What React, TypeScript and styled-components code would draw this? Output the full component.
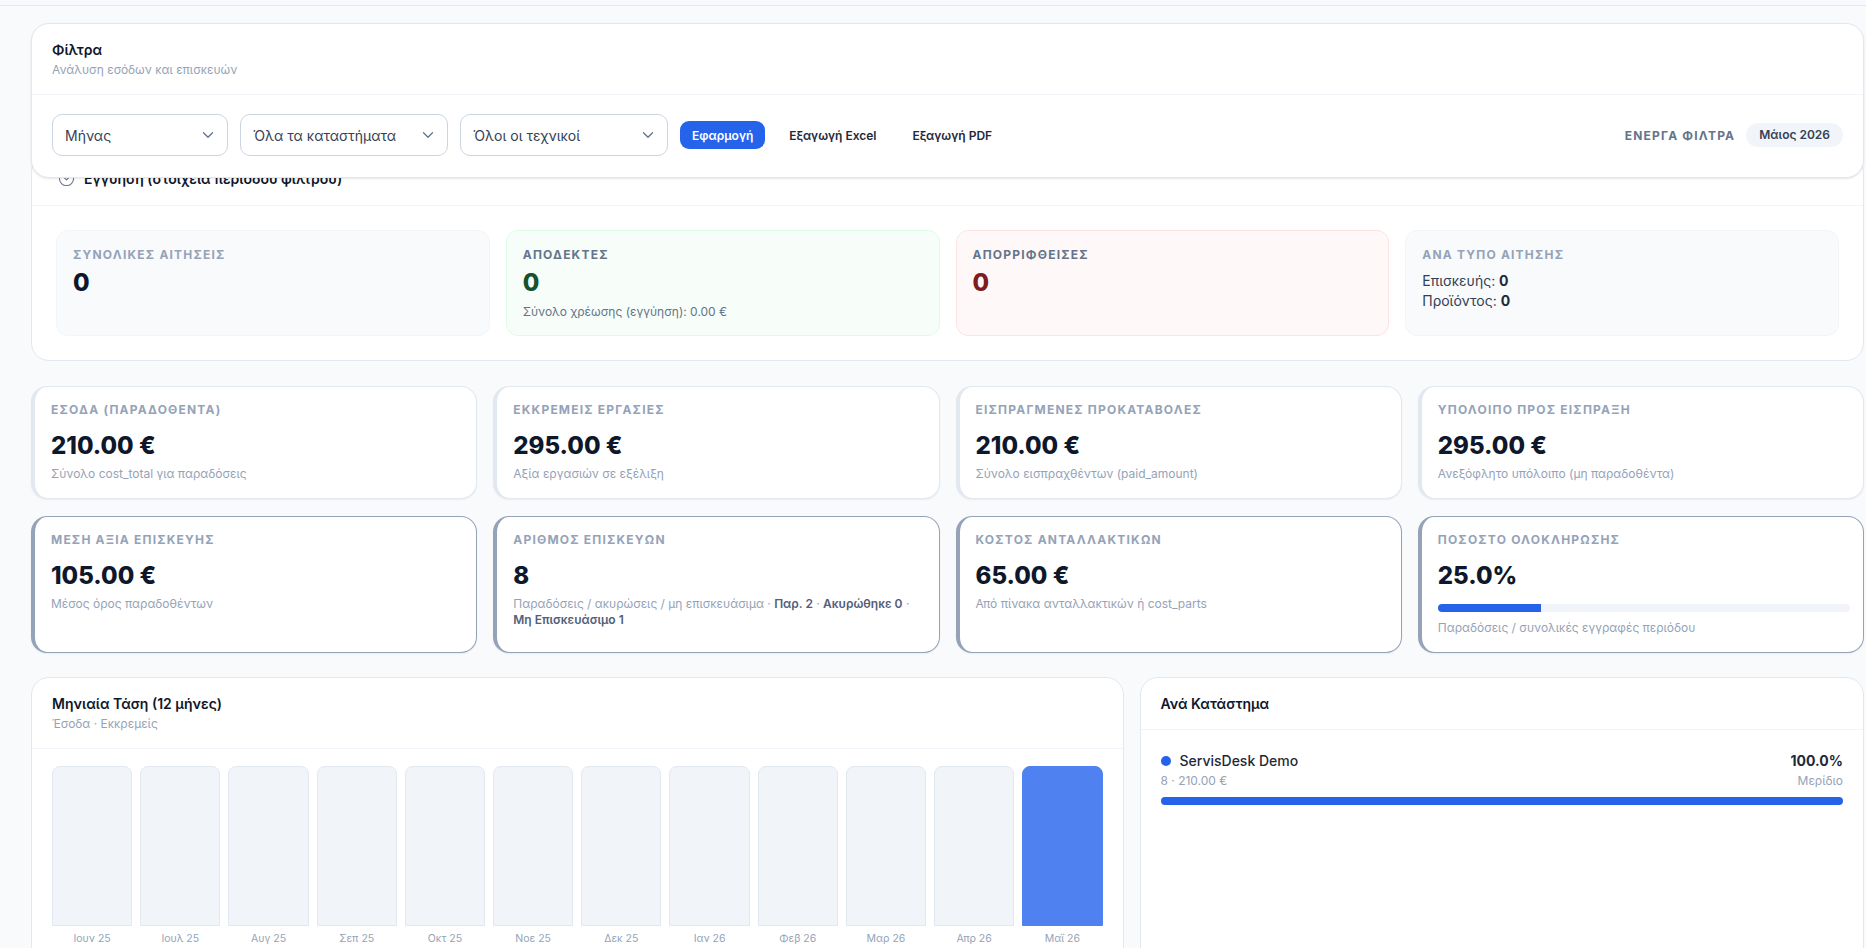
import { ChevronDown, CircleChevronDown } from "lucide-react";
import styled, { createGlobalStyle } from "styled-components";

const months = [
  "Ιουν 25",
  "Ιουλ 25",
  "Αυγ 25",
  "Σεπ 25",
  "Οκτ 25",
  "Νοε 25",
  "Δεκ 25",
  "Ιαν 26",
  "Φεβ 26",
  "Μαρ 26",
  "Απρ 26",
  "Μαϊ 26",
];

const App = () => {
  return (
    <>
      <GlobalStyle />
      <Page>
        <TopEdge />
        <Main>
          <FilterCard>
            <PanelHead>
              <PanelTitle>Φίλτρα</PanelTitle>
              <PanelSub>Ανάλυση εσόδων και επισκευών</PanelSub>
            </PanelHead>
            <FilterRow>
              <SelectBox $width={176}>
                Μήνας
                <ChevronDown size={18} strokeWidth={1.7} />
              </SelectBox>
              <SelectBox $width={208}>
                Όλα τα καταστήματα
                <ChevronDown size={18} strokeWidth={1.7} />
              </SelectBox>
              <SelectBox $width={208}>
                Όλοι οι τεχνικοί
                <ChevronDown size={18} strokeWidth={1.7} />
              </SelectBox>
              <PrimaryButton>Εφαρμογή</PrimaryButton>
              <GhostButton>Εξαγωγή Excel</GhostButton>
              <GhostButton>Εξαγωγή PDF</GhostButton>
              <ActiveFilters>
                <ActiveLabel>ΕΝΕΡΓΑ ΦΙΛΤΡΑ</ActiveLabel>
                <Chip>Μάιος 2026</Chip>
              </ActiveFilters>
            </FilterRow>
          </FilterCard>

          <WarrantyCard>
            <WarrantyHead>
              <CircleChevronDown size={17} strokeWidth={1.5} color="#64748b" />
              Εγγύηση (στοιχεία περιόδου φίλτρου)
            </WarrantyHead>
            <StatGrid>
              <StatBox $tone="plain">
                <StatLabel>ΣΥΝΟΛΙΚΕΣ ΑΙΤΗΣΕΙΣ</StatLabel>
                <StatValue>0</StatValue>
              </StatBox>
              <StatBox $tone="green">
                <StatLabel $dark>ΑΠΟΔΕΚΤΕΣ</StatLabel>
                <StatValue $color="#14532d">0</StatValue>
                <StatNote>Σύνολο χρέωσης (εγγύηση): 0.00 €</StatNote>
              </StatBox>
              <StatBox $tone="red">
                <StatLabel $dark>ΑΠΟΡΡΙΦΘΕΙΣΕΣ</StatLabel>
                <StatValue $color="#7f1d1d">0</StatValue>
              </StatBox>
              <StatBox $tone="plain">
                <StatLabel>ΑΝΑ ΤΥΠΟ ΑΙΤΗΣΗΣ</StatLabel>
                <TypeLines>
                  <div>
                    Επισκευής: <b>0</b>
                  </div>
                  <div>
                    Προϊόντος: <b>0</b>
                  </div>
                </TypeLines>
              </StatBox>
            </StatGrid>
          </WarrantyCard>

          <KpiGrid>
            <KpiCard>
              <KpiLabel>ΕΣΟΔΑ (ΠΑΡΑΔΟΘΕΝΤΑ)</KpiLabel>
              <KpiValue>210.00 €</KpiValue>
              <KpiNote>Σύνολο cost_total για παραδόσεις</KpiNote>
            </KpiCard>
            <KpiCard>
              <KpiLabel>ΕΚΚΡΕΜΕΙΣ ΕΡΓΑΣΙΕΣ</KpiLabel>
              <KpiValue>295.00 €</KpiValue>
              <KpiNote>Αξία εργασιών σε εξέλιξη</KpiNote>
            </KpiCard>
            <KpiCard>
              <KpiLabel>ΕΙΣΠΡΑΓΜΕΝΕΣ ΠΡΟΚΑΤΑΒΟΛΕΣ</KpiLabel>
              <KpiValue>210.00 €</KpiValue>
              <KpiNote>Σύνολο εισπραχθέντων (paid_amount)</KpiNote>
            </KpiCard>
            <KpiCard>
              <KpiLabel>ΥΠΟΛΟΙΠΟ ΠΡΟΣ ΕΙΣΠΡΑΞΗ</KpiLabel>
              <KpiValue>295.00 €</KpiValue>
              <KpiNote>Ανεξόφλητο υπόλοιπο (μη παραδοθέντα)</KpiNote>
            </KpiCard>
            <KpiCard $strong>
              <KpiLabel>ΜΕΣΗ ΑΞΙΑ ΕΠΙΣΚΕΥΗΣ</KpiLabel>
              <KpiValue>105.00 €</KpiValue>
              <KpiNote>Μέσος όρος παραδοθέντων</KpiNote>
            </KpiCard>
            <KpiCard $strong>
              <KpiLabel>ΑΡΙΘΜΟΣ ΕΠΙΣΚΕΥΩΝ</KpiLabel>
              <KpiValue>8</KpiValue>
              <KpiNote>
                Παραδόσεις / ακυρώσεις / μη επισκευάσιμα · <b>Παρ. 2</b> ·{" "}
                <b>Ακυρώθηκε 0</b> · <b>Μη Επισκευάσιμο 1</b>
              </KpiNote>
            </KpiCard>
            <KpiCard $strong>
              <KpiLabel>ΚΟΣΤΟΣ ΑΝΤΑΛΛΑΚΤΙΚΩΝ</KpiLabel>
              <KpiValue>65.00 €</KpiValue>
              <KpiNote>Από πίνακα ανταλλακτικών ή cost_parts</KpiNote>
            </KpiCard>
            <KpiCard $strong>
              <KpiLabel>ΠΟΣΟΣΤΟ ΟΛΟΚΛΗΡΩΣΗΣ</KpiLabel>
              <KpiValue>25.0%</KpiValue>
              <ProgressTrack>
                <ProgressFill style={{ width: "25%" }} />
              </ProgressTrack>
              <ProgressNote>Παραδόσεις / συνολικές εγγραφές περιόδου</ProgressNote>
            </KpiCard>
          </KpiGrid>

          <BottomGrid>
            <Panel>
              <PanelHead>
                <PanelTitle>Μηνιαία Τάση (12 μήνες)</PanelTitle>
                <PanelSub>Έσοδα · Εκκρεμείς</PanelSub>
              </PanelHead>
              <Chart>
                {months.map((month, i) => (
                  <BarColumn key={month}>
                    <Bar $active={i === months.length - 1} />
                    <BarLabel>{month}</BarLabel>
                  </BarColumn>
                ))}
              </Chart>
            </Panel>
            <Panel>
              <PanelHead>
                <PanelTitle>Ανά Κατάστημα</PanelTitle>
              </PanelHead>
              <ShopBody>
                <ShopRow>
                  <div>
                    <ShopName>
                      <ShopDot />
                      ServisDesk Demo
                    </ShopName>
                    <ShopMeta>8 · 210.00 €</ShopMeta>
                  </div>
                  <ShopRight>
                    <ShopShare>100.0%</ShopShare>
                    <ShopMeta>Μερίδιο</ShopMeta>
                  </ShopRight>
                </ShopRow>
                <ShopBar />
              </ShopBody>
            </Panel>
          </BottomGrid>
        </Main>
      </Page>
    </>
  );
};

const GlobalStyle = createGlobalStyle`
  html, body {
    margin: 0;
    height: 100%;
    overflow: hidden;
    background: #f8fafc;
    font-family: Inter, "Noto Sans", sans-serif;
    color: #0f172a;
  }
  * {
    box-sizing: border-box;
  }
`;

const Page = styled.div`
  height: 948px;
  overflow: hidden;
`;

const TopEdge = styled.div`
  height: 6px;
  background: #f8f9fe;
  border-bottom: 1px solid #e2e8f0;
`;

const Main = styled.main`
  padding: 17px 2px 0 31px;
`;

const Panel = styled.section`
  background: #fff;
  border: 1px solid #e2e8f0;
  border-radius: 18px;
  overflow: hidden;
`;

const FilterCard = styled(Panel)`
  position: relative;
  z-index: 2;
  height: 155px;
  box-shadow: 0 1px 2px rgba(15, 23, 42, 0.1);
`;

const PanelHead = styled.header`
  padding: 16px 20px 15px;
  border-bottom: 1px solid #f1f5f9;
`;

const PanelTitle = styled.div`
  font-size: 14px;
  line-height: 20px;
  font-weight: 600;
  color: #0f172a;
`;

const PanelSub = styled.div`
  margin-top: 1px;
  font-size: 12px;
  line-height: 18px;
  color: #94a3b8;
`;

const FilterRow = styled.div`
  display: flex;
  align-items: center;
  gap: 12px;
  padding: 19px 20px 0 20px;
`;

const SelectBox = styled.div<{ $width: number }>`
  display: flex;
  align-items: center;
  justify-content: space-between;
  width: ${(p) => p.$width}px;
  height: 42px;
  padding: 0 10px 0 12px;
  background: #fff;
  border: 1px solid #cbd5e1;
  border-radius: 10px;
  font-size: 14px;
  color: #334155;

  svg {
    color: #64748b;
  }
`;

const PrimaryButton = styled.button`
  height: 28px;
  padding: 0 12px;
  background: #2563eb;
  border: 0;
  border-radius: 9px;
  font: 600 12px Inter, sans-serif;
  color: #fff;
`;

const GhostButton = styled.button`
  height: 28px;
  padding: 0 12px;
  background: transparent;
  border: 0;
  font: 600 12px Inter, sans-serif;
  color: #1e293b;
`;

const ActiveFilters = styled.div`
  display: flex;
  align-items: center;
  gap: 11px;
  margin-left: auto;
`;

const ActiveLabel = styled.span`
  font-size: 12px;
  font-weight: 700;
  letter-spacing: 1.2px;
  color: #64748b;
`;

const Chip = styled.span`
  padding: 5px 13px;
  background: #f1f5f9;
  border-radius: 999px;
  font-size: 12px;
  font-weight: 600;
  line-height: 14px;
  color: #334155;
`;

const WarrantyCard = styled(Panel)`
  margin-top: -24px;
`;

const WarrantyHead = styled.div`
  display: flex;
  align-items: center;
  gap: 9px;
  height: 51px;
  padding: 0 0 3px 26px;
  border-bottom: 1px solid #f1f5f9;
  font-size: 14px;
  font-weight: 600;
  color: #0f172a;
`;

const toneStyles = {
  plain: "background: #f8fafc; border-color: #f1f5f9;",
  green: "background: #f7fdf9; border-color: #dcfce7;",
  red: "background: #fef8f8; border-color: #fee2e2;",
};

const StatGrid = styled.div`
  display: grid;
  grid-template-columns: repeat(4, minmax(0, 1fr));
  gap: 16px;
  padding: 24px;
`;

const StatBox = styled.div<{ $tone: keyof typeof toneStyles }>`
  height: 106px;
  padding: 16px;
  border: 1px solid;
  border-radius: 12px;
  ${(p) => toneStyles[p.$tone]}
`;

const StatLabel = styled.div<{ $dark?: boolean }>`
  font-size: 12px;
  line-height: 16px;
  font-weight: 700;
  letter-spacing: 1.2px;
  color: ${(p) => (p.$dark ? "#64748b" : "#94a3b8")};
`;

const StatValue = styled.div<{ $color?: string }>`
  margin-top: 4px;
  font-size: 24px;
  line-height: 32px;
  font-weight: 800;
  color: ${(p) => p.$color ?? "#0f172a"};
`;

const StatNote = styled.div`
  margin-top: 4px;
  font-size: 12px;
  line-height: 18px;
  color: #64748b;
`;

const TypeLines = styled.div`
  margin-top: 8px;
  font-size: 14px;
  line-height: 20px;
  color: #334155;

  b {
    font-weight: 700;
    color: #1e293b;
  }
`;

const KpiGrid = styled.div`
  display: grid;
  grid-template-columns: repeat(4, minmax(0, 1fr));
  grid-template-rows: 113px 137px;
  gap: 17px 16px;
  margin-top: 25px;
`;

const KpiCard = styled.div<{ $strong?: boolean }>`
  padding: 14px 13px 0 16px;
  background: #fff;
  border: 1px solid ${(p) => (p.$strong ? "#94a3b8" : "#e2e8f0")};
  border-left-width: 4px;
  border-radius: 16px;
  box-shadow: 0 1px 2px rgba(15, 23, 42, 0.06);
`;

const KpiLabel = styled.div`
  font-size: 12px;
  line-height: 18px;
  font-weight: 700;
  letter-spacing: 1.2px;
  color: #94a3b8;
`;

const KpiValue = styled.div`
  margin-top: 11px;
  font-size: 24px;
  line-height: 32px;
  font-weight: 800;
  color: #0f172a;
`;

const KpiNote = styled.div`
  margin-top: 4px;
  font-size: 12px;
  line-height: 16px;
  color: #94a3b8;

  b {
    font-weight: 600;
    color: #526078;
  }
`;

const ProgressNote = styled(KpiNote)`
  margin-top: 8px;
`;

const ProgressTrack = styled.div`
  height: 8px;
  margin-top: 12px;
  background: #f1f5f9;
  border-radius: 999px;
  overflow: hidden;
`;

const ProgressFill = styled.div`
  height: 100%;
  background: #2563eb;
`;

const BottomGrid = styled.div`
  display: grid;
  grid-template-columns: minmax(0, 1.508fr) minmax(0, 1fr);
  gap: 16px;
  margin-top: 24px;
`;

const Chart = styled.div`
  display: grid;
  grid-template-columns: repeat(12, minmax(0, 1fr));
  gap: 8px;
  padding: 17px 20px;
`;

const BarColumn = styled.div`
  display: flex;
  flex-direction: column;
  gap: 6px;
`;

const Bar = styled.div<{ $active: boolean }>`
  height: 160px;
  background: ${(p) => (p.$active ? "#4f81f0" : "#f1f5f9")};
  border: 1px solid ${(p) => (p.$active ? "#4f81f0" : "#e2e8f0")};
  border-radius: 8px 8px 0 0;
`;

const BarLabel = styled.div`
  font-size: 10.5px;
  line-height: 14px;
  text-align: center;
  color: #94a3b8;
`;

const ShopBody = styled.div`
  padding: 21px 20px;
`;

const ShopRow = styled.div`
  display: flex;
  justify-content: space-between;
`;

const ShopName = styled.div`
  display: flex;
  align-items: center;
  gap: 9px;
  font-size: 14px;
  line-height: 20px;
  font-weight: 500;
  color: #1e293b;
`;

const ShopDot = styled.span`
  width: 10px;
  height: 10px;
  background: #2563eb;
  border-radius: 50%;
`;

const ShopMeta = styled.div`
  margin-top: 1px;
  font-size: 12px;
  line-height: 18px;
  color: #94a3b8;
`;

const ShopRight = styled.div`
  text-align: right;
`;

const ShopShare = styled.div`
  font-size: 14px;
  line-height: 20px;
  font-weight: 700;
  color: #1e293b;
`;

const ShopBar = styled.div`
  height: 8px;
  margin-top: 7px;
  background: #2563eb;
  border-radius: 999px;
`;

export default App;
